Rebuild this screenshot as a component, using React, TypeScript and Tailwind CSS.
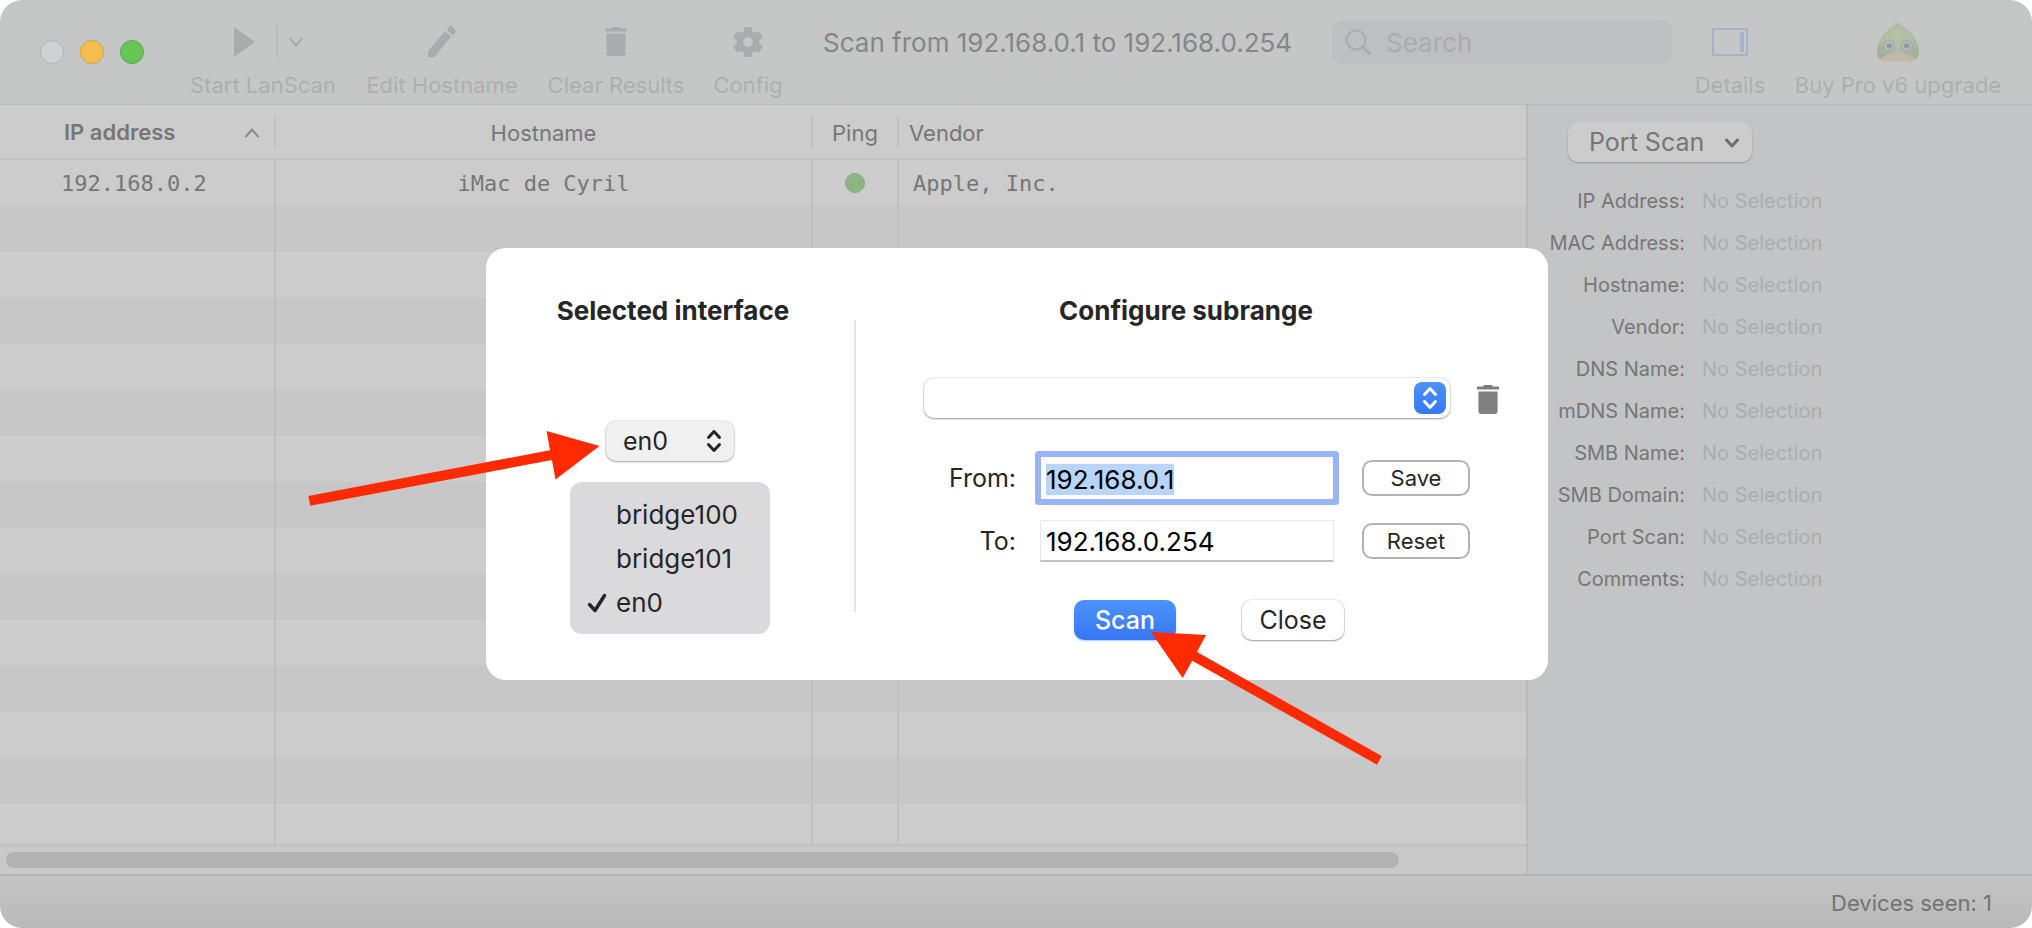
import { useEffect, useRef } from "react";
import type { ReactNode } from "react";

const details = [
  "IP Address:",
  "MAC Address:",
  "Hostname:",
  "Vendor:",
  "DNS Name:",
  "mDNS Name:",
  "SMB Name:",
  "SMB Domain:",
  "Port Scan:",
  "Comments:",
];

const interfaces = ["bridge100", "bridge101", "en0"];

const emptyRows = Array.from({ length: 14 }, (_, i) => i);

function TrashIcon({ className }: { className: string }) {
  return (
    <svg viewBox="0 0 24 32" className={className} fill="currentColor" aria-hidden="true">
      <path d="M1 2.500h6.200L8 1h8l.8 1.500H23v3H1z" />
      <path d="M2.400 7.500h19.200V27a3 3 0 0 1-3 3H5.400a3 3 0 0 1-3-3z" />
    </svg>
  );
}

function GearIcon() {
  return (
    <svg viewBox="2 2 20 20" className="size-[30px]" fill="currentColor" aria-hidden="true">
      <path d="M19.430 12.980c.04-.32.070-.64.070-.98s-.03-.66-.07-.98l2.110-1.650c.19-.15.240-.42.120-.64l-2-3.460c-.12-.22-.39-.3-.61-.22l-2.490 1c-.52-.4-1.080-.73-1.690-.98l-.38-2.650A.488.488 0 0 0 14 2h-4c-.25 0-.46.180-.49.420l-.38 2.650c-.61.250-1.170.59-1.690.98l-2.490-1c-.23-.09-.49 0-.61.220l-2 3.460c-.13.220-.07.490.12.640l2.110 1.650c-.04.320-.07.650-.07.980s.03.660.07.980l-2.110 1.650c-.19.150-.24.420-.12.640l2 3.460c.12.220.39.300.61.220l2.490-1c.52.400 1.080.730 1.690.980l.38 2.650c.03.240.24.420.49.420h4c.25 0 .46-.18.49-.42l.38-2.650c.61-.25 1.170-.59 1.690-.98l2.490 1c.23.090.49 0 .61-.22l2-3.460c.12-.22.070-.49-.12-.64zM12 15.200a3.200 3.200 0 1 1 0-6.400 3.200 3.200 0 0 1 0 6.400z" />
    </svg>
  );
}

function DuckIcon() {
  return (
    <svg viewBox="0 0 44 42" className="h-[42px] w-11 opacity-75" aria-hidden="true">
      <defs>
        <radialGradient id="duck-head" cx="0.5" cy="0.35" r="0.65">
          <stop offset="0" stopColor="#b3c2a0" />
          <stop offset="0.6" stopColor="#a5b895" />
          <stop offset="1" stopColor="#93a88c" />
        </radialGradient>
      </defs>
      <path
        d="M22 3c-1.500-1-3-1-4-.4 1 .2 1.500.6 1.800 1.200C11 7 2 19 1 29c-.6 5 2 9 6 11h30c4-2 6.600-6 6-11C42 19 33 7 24.500 3.800c.5-.7 1-1 1.500-1-.8-.7-1.700-.6-2.300-.3C23.300 1.600 22.500 1 21.500 1c.5.600.6 1.300.5 2z"
        fill="url(#duck-head)"
      />
      <path d="M14 33c4-2 12-2 16 0 3 1 7 2 8.500 4 .5 2.500-1 4-3 4-5-1-22-1-27 0-2 0-3.500-1.500-3-4 1.500-2 5.500-3 8.500-4z" fill="#c6b39c" />
      <circle cx="13" cy="25" r="5.300" fill="#b9bcc0" stroke="#979d98" strokeWidth="1.300" />
      <circle cx="31" cy="25" r="5.300" fill="#b9bcc0" stroke="#979d98" strokeWidth="1.300" />
      <circle cx="13.200" cy="25" r="2.800" fill="#868a8c" />
      <circle cx="30.800" cy="25" r="2.800" fill="#868a8c" />
    </svg>
  );
}

function UpDownIcon({ className }: { className: string }) {
  return (
    <svg viewBox="0 0 16 24" className={className} fill="none" stroke="currentColor" strokeWidth="3" strokeLinecap="round" strokeLinejoin="round" aria-hidden="true">
      <path d="M2.500 8.500 8 2.500l5.500 6M2.500 15.500l5.500 6 5.500-6" />
    </svg>
  );
}

function ToolItem({ label, width, children }: { label: string; width: string; children: ReactNode }) {
  return (
    <button type="button" className={`flex shrink-0 flex-col items-center whitespace-nowrap text-[#adafae] ${width}`}>
      <span className="flex h-11 items-center justify-center text-[#aaabad]">{children}</span>
      <span className="mt-[5px] text-[22px] leading-8">{label}</span>
    </button>
  );
}

function Toolbar() {
  return (
    <header className="flex h-[105px] shrink-0 items-start border-b border-[#b8baba] bg-[#c5c7c6] pt-5 pr-[30px] pl-10">
      <div className="flex shrink-0 gap-4 pt-5">
        <span className="size-6 rounded-full border border-[#b3b4b7] bg-[#d0d1d4]" />
        <span className="size-6 rounded-full border border-[#d9a03d] bg-[#f4bd4f]" />
        <span className="size-6 rounded-full border border-[#56ac43] bg-[#67c655]" />
      </div>
      <div className="ml-[45px] flex gap-7">
        <ToolItem label="Start LanScan" width="w-[148px]">
          <svg viewBox="-12 0 84 36" className="h-9 w-[84px]" aria-hidden="true">
            <path d="M1 3v30l21-15z" fill="currentColor" />
            <path d="M44 1v34" stroke="#bbbdbc" strokeWidth="2" />
            <path d="m57.500 15 5.500 6.500 5.500-6.500" fill="none" stroke="currentColor" strokeWidth="2.500" strokeLinecap="round" strokeLinejoin="round" />
          </svg>
        </ToolItem>
        <ToolItem label="Edit Hostname" width="w-[154px]">
          <svg viewBox="0 0 32 36" className="h-9 w-8" fill="currentColor" aria-hidden="true">
            <path d="M2 27 19 7.200l5.800 5.600L8.500 33H2z" />
            <path d="m20.800 5.500 4-4.700 5.700 6.400-4 4.600z" />
          </svg>
        </ToolItem>
        <ToolItem label="Clear Results" width="w-[138px]">
          <TrashIcon className="h-[32px] w-6" />
        </ToolItem>
        <ToolItem label="Config" width="w-[70px]">
          <GearIcon />
        </ToolItem>
      </div>
      <h1 className="ml-10 min-w-0 flex-1 truncate text-[26px] leading-[46px] text-[#848685]">Scan from 192.168.0.1 to 192.168.0.254</h1>
      <label className="flex h-11 w-[340px] shrink-0 items-center gap-3.5 rounded-[10px] bg-[#bebfc1] pl-3">
        <svg viewBox="0 0 28 28" className="size-7 shrink-0" fill="none" stroke="#aaacab" aria-hidden="true">
          <circle cx="12" cy="12" r="9.500" strokeWidth="2" />
          <path d="m19 19 6.500 6.500" strokeWidth="3" strokeLinecap="round" />
        </svg>
        <input type="search" aria-label="Search" placeholder="Search" className="w-full min-w-0 bg-transparent text-[26px] outline-none placeholder:text-[#aaacab]" />
      </label>
      <div className="ml-5 flex gap-[26px]">
        <ToolItem label="Details" width="w-[76px]">
          <svg viewBox="0 0 36 28" className="h-7 w-9" aria-hidden="true">
            <path d="M1 1h34v26H1z" fill="none" stroke="#a7b1cb" strokeWidth="2" />
            <path d="M28 4h4v20h-4z" fill="#a7b1cb" />
          </svg>
        </ToolItem>
        <ToolItem label="Buy Pro v6 upgrade" width="w-[208px]">
          <DuckIcon />
        </ToolItem>
      </div>
    </header>
  );
}

function DeviceTable() {
  return (
    <section className="flex min-w-0 flex-1 flex-col bg-[#cccccc] text-[#767676]">
      <div className="min-h-0 flex-1 overflow-hidden border-b-2 border-[#c0c0c0]">
        <table className="w-full table-fixed border-separate border-spacing-0">
          <colgroup>
            <col className="w-[276px]" />
            <col className="w-[537px]" />
            <col className="w-[86px]" />
            <col />
          </colgroup>
          <thead className="text-[22px]">
            <tr className="h-[55px]">
              <th scope="col" className="border-b-2 border-[#c0c0c0] p-0 font-semibold">
                <div className="flex h-8 items-center justify-between border-r-2 border-[#c0c0c0] pt-0.5 pr-3.5 pl-16">
                  IP address
                  <svg viewBox="0 0 16 10" className="h-2.5 w-4" fill="none" stroke="#8a8a8a" strokeWidth="2" strokeLinecap="round" strokeLinejoin="round" aria-hidden="true">
                    <path d="m2 8.500 6-7 6 7" />
                  </svg>
                </div>
              </th>
              <th scope="col" className="border-b-2 border-[#c0c0c0] p-0 font-normal">
                <div className="h-8 border-r-2 border-[#c0c0c0] pt-0.5 leading-[30px]">Hostname</div>
              </th>
              <th scope="col" className="border-b-2 border-[#c0c0c0] p-0 font-normal">
                <div className="h-8 border-r-2 border-[#c0c0c0] pt-0.5 leading-[30px]">Ping</div>
              </th>
              <th scope="col" className="border-b-2 border-[#c0c0c0] p-0 text-left font-normal">
                <div className="h-8 pt-0.5 pl-2.5 leading-[30px]">Vendor</div>
              </th>
            </tr>
          </thead>
          <tbody>
            <tr className="h-[46px] font-['DejaVu_Sans_Mono',monospace] text-[22px]">
              <td className="border-r-2 border-[#c0c0c0] p-0 pl-[61px]">192.168.0.2</td>
              <td className="border-r-2 border-[#c0c0c0] p-0 text-center">iMac de Cyril</td>
              <td className="border-r-2 border-[#c0c0c0] p-0">
                <span role="img" aria-label="Online" className="mx-auto block size-5 rounded-full border border-[#87ae80] bg-[#8cb485]" />
              </td>
              <td className="p-0 pl-3.5">Apple, Inc.</td>
            </tr>
            {emptyRows.map((i) => (
              <tr key={i} className="h-[46px] odd:bg-[#cccccc] even:bg-[#c7c7c7]">
                <td className="border-r-2 border-[#c0c0c0] p-0" />
                <td className="border-r-2 border-[#c0c0c0] p-0" />
                <td className="border-r-2 border-[#c0c0c0] p-0" />
                <td className="p-0" />
              </tr>
            ))}
          </tbody>
        </table>
      </div>
      <div className="flex h-7 shrink-0 items-center bg-[#c9c9c9] px-1.5">
        <div className="h-4 w-[92%] rounded-full bg-[#b2b2b2]" />
      </div>
    </section>
  );
}

function DetailsPanel() {
  return (
    <aside className="w-[506px] shrink-0 border-l-2 border-[#b9babc] bg-[#c3c4c6] pt-[17px] text-[#767676]">
      <div className="relative ml-10 w-[184px]">
        <select aria-label="Panel" className="h-10 w-full appearance-none rounded-[10px] bg-[#cccccc] pl-[21px] text-[25px] leading-8 shadow-[0_1px_2px_rgba(0,0,0,0.25)]">
          <option>Port Scan</option>
        </select>
        <svg viewBox="0 0 16 12" className="pointer-events-none absolute top-[15px] right-3 h-3 w-4" fill="none" stroke="#6e6e6e" strokeWidth="3" strokeLinecap="round" strokeLinejoin="round" aria-hidden="true">
          <path d="m2.500 3 5.500 6 5.500-6" />
        </svg>
      </div>
      <dl className="mt-[18px] text-[20px] leading-[42px]">
        {details.map((label) => (
          <div key={label} className="flex gap-[17px]">
            <dt className="w-[157px] shrink-0 text-right whitespace-nowrap">{label}</dt>
            <dd className="text-[#abacae]">No Selection</dd>
          </div>
        ))}
      </dl>
    </aside>
  );
}

function ConfigDialog() {
  const from = useRef<HTMLInputElement>(null);
  useEffect(() => {
    from.current?.focus();
    from.current?.select();
  }, []);

  return (
    <div role="dialog" aria-label="Config" className="flex h-[432px] w-[1062px] rounded-[20px] bg-white text-[#262626]">
      <section className="flex w-[368px] flex-col items-center pt-[47px]">
        <h2 className="pl-1.5 text-[26px] leading-8 font-bold">Selected interface</h2>
        <div className="relative mt-[94px] w-32">
          <select aria-label="Selected interface" defaultValue="en0" className="h-10 w-full appearance-none rounded-[10px] bg-[#f0f0f0] pl-[17px] text-[25px] leading-8 shadow-[0_0_1px_1px_rgba(0,0,0,0.08),0_1px_2px_rgba(0,0,0,0.3)]">
            {interfaces.map((name) => (
              <option key={name}>{name}</option>
            ))}
          </select>
          <UpDownIcon className="pointer-events-none absolute top-2 right-3 h-6 w-4" />
        </div>
        <ul className="mt-[21px] w-[200px] rounded-[12px] bg-[#dadadc] pt-[11px] pb-[9px] text-[26px] leading-[44px]">
          {interfaces.map((name) => (
            <li key={name} className="flex items-center">
              <span className="flex w-[46px] justify-center pl-2">
                {name === "en0" && (
                  <svg viewBox="0 0 20 20" className="size-5" fill="none" stroke="currentColor" strokeWidth="3.500" strokeLinecap="round" strokeLinejoin="round" aria-hidden="true">
                    <path d="m2.500 11.500 5.500 6L17.500 2.500" />
                  </svg>
                )}
              </span>
              {name}
            </li>
          ))}
        </ul>
      </section>
      <div className="mt-[72px] mb-[68px] w-0.5 bg-[#e3e3e3]" />
      <section className="flex min-w-0 flex-1 flex-col pt-[47px]">
        <h2 className="pr-8 text-center text-[26px] leading-8 font-bold">Configure subrange</h2>
        <div className="mt-[51px] flex h-10 items-center pl-[68px]">
          <div className="relative w-[526px]">
            <select aria-label="Saved subranges" className="h-10 w-full appearance-none rounded-[10px] bg-white shadow-[0_0_1px_1px_rgba(0,0,0,0.07),0_1px_2px_rgba(0,0,0,0.35)]" />
            <span className="pointer-events-none absolute top-1 right-1 flex h-8 w-8 items-center justify-center rounded-[8px] bg-linear-to-b from-[#4d92f8] to-[#3577f5] text-white">
              <UpDownIcon className="h-6 w-4" />
            </span>
          </div>
          <button type="button" aria-label="Delete subrange" className="ml-[26px] pt-1 text-[#808080]">
            <TrashIcon className="h-[32px] w-6" />
          </button>
        </div>
        <div className="mt-[39px] flex items-center text-[25px]">
          <label htmlFor="range-from" className="w-[160px] text-right leading-8">From:</label>
          <input
            id="range-from"
            ref={from}
            defaultValue="192.168.0.1"
            className="ml-[25px] h-[42px] w-[292px] rounded-[1px] bg-white px-[5px] pt-0.5 text-[26px] leading-8 text-black shadow-[0_0_0_6px_#99b3f6] outline-none selection:bg-[#b9d5fb] selection:text-black"
          />
          <button type="button" className="ml-[29px] h-9 w-[108px] rounded-[10px] border-2 border-[#b2b2b2] text-[22px] leading-7">Save</button>
        </div>
        <div className="mt-[21px] flex items-center text-[25px]">
          <label htmlFor="range-to" className="w-[160px] text-right leading-8">To:</label>
          <input
            id="range-to"
            defaultValue="192.168.0.254"
            className="ml-6 h-[42px] w-[294px] border border-b-2 border-[#e9e9e9] border-b-[#c2c2c2] bg-white px-[5px] pt-0.5 text-[26px] leading-8 text-black outline-none"
          />
          <button type="button" className="ml-7 h-9 w-[108px] rounded-[10px] border-2 border-[#b2b2b2] text-[22px] leading-7">Reset</button>
        </div>
        <div className="mt-[38px] flex gap-[66px] pl-[218px] text-[25px] leading-8">
          <button type="button" className="h-10 w-[102px] rounded-[10px] bg-linear-to-b from-[#4d92f8] to-[#3577f5] font-medium text-white shadow-[0_1px_2px_rgba(53,119,245,0.4)]">Scan</button>
          <button type="button" className="h-10 w-[102px] rounded-[10px] bg-white shadow-[0_0_1px_1px_rgba(0,0,0,0.07),0_1px_2px_rgba(0,0,0,0.35)]">Close</button>
        </div>
      </section>
    </div>
  );
}

export default function App() {
  return (
    <div className="h-screen bg-white font-['Inter',sans-serif]">
      <div className="relative flex h-full flex-col overflow-hidden rounded-[22px]">
        <Toolbar />
        <main className="flex min-h-0 flex-1">
          <DeviceTable />
          <DetailsPanel />
        </main>
        <footer className="flex h-[54px] shrink-0 items-center justify-end border-t-2 border-[#b5b5b5] bg-linear-to-b from-[#c4c4c4] to-[#b9b9b9] pt-0.5 pr-10 text-[22px] text-[#737373]">
          Devices seen: 1
        </footer>
        <div className="absolute inset-x-0 top-[248px] flex justify-center pl-0.5">
          <div className="relative">
            <ConfigDialog />
            <svg viewBox="0 0 1100 350" className="pointer-events-none absolute top-[170px] -left-[190px] h-[350px] w-[1100px]" fill="#ff2a00" aria-hidden="true">
              <path d="M12.300 78 254 32.300 250.500 13 303.500 28 259.500 61.500 256 42 14.300 87.700z" />
              <path d="m855 214 55 3-9 17 184.700 104-4.700 8.700-184.800-104-9.500 17.300z" />
            </svg>
          </div>
        </div>
      </div>
    </div>
  );
}
